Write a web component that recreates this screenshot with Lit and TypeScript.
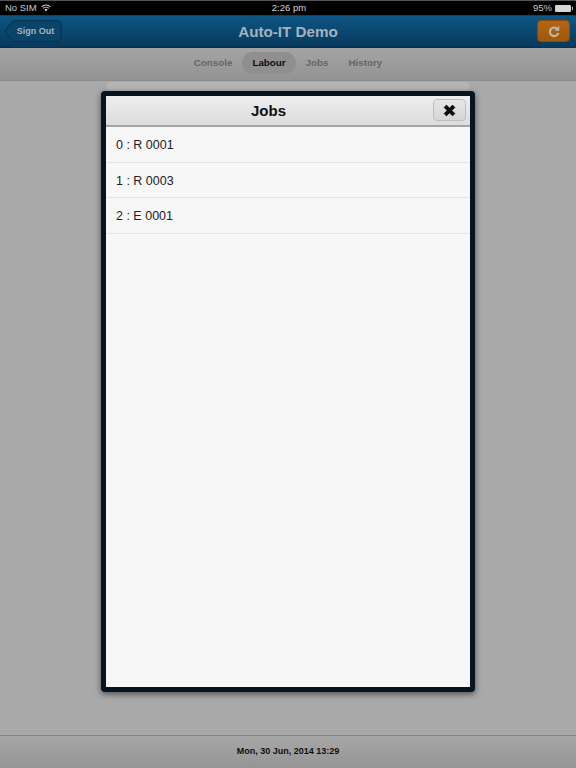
import { LitElement, html, css } from "lit";
import { customElement } from "lit/decorators.js";

@customElement("app-root")
export class AppRoot extends LitElement {
  static styles = css`
    :host { display: block; width: 576px; height: 768px; overflow: hidden; font-family: "Liberation Sans", Arial, sans-serif; }
    .page { position: relative; display: flex; flex-direction: column; height: 768px; background: #a9a9a9; }
    .status { height: 15px; background: #000; border-top: 1px solid #555; box-sizing: border-box; display: grid; grid-template-columns: 1fr auto 1fr; align-items: center; padding: 0 3px 0 5px; color: #c9c9c9; font-size: 9.5px; line-height: 14px; }
    .status .left { display: flex; align-items: center; gap: 4px; }
    .status .time { color: #d4d4d4; font-size: 9.5px; }
    .status .right { display: flex; align-items: center; justify-content: flex-end; gap: 3px; }
    .battery { display: flex; align-items: center; }
    .battery i { display: block; width: 14px; height: 5px; background: #d6d6d6; border: 1px solid #d6d6d6; border-radius: 1px; }
    .battery b { display: block; width: 1px; height: 3px; background: #bbb; margin-left: 1px; }
    .nav { height: 33px; box-sizing: border-box; display: flex; align-items: center; justify-content: space-between; padding: 0 6px 0 4px; position: relative; background: linear-gradient(#0e5684, #07395c); border-top: 1px solid #0a4569; border-bottom: 1px solid #06304c; }
    .nav h1 { position: absolute; left: 0; right: 0; top: 6px; margin: 0; text-align: center; font-size: 15.2px; line-height: 19px; font-weight: 700; color: #a4b2bd; }
    .back { display: block; position: relative; z-index: 1; margin-top: -1px; }
    .refresh { position: relative; z-index: 1; width: 33px; height: 22px; box-sizing: border-box; margin-top: -1px; border: 1px solid #8a4a0c; border-radius: 4px; background: linear-gradient(#b5650f, #a0580c); display: flex; align-items: center; justify-content: center; }
    .tabs { height: 33px; box-sizing: border-box; display: flex; align-items: center; justify-content: center; gap: 0; padding: 0 0 3px 0; background: linear-gradient(#a4a4a4, #939393); border-bottom: 1px solid #8a8a8a; }
    .tab { font-size: 9.8px; font-weight: 700; color: #666; height: 22px; line-height: 22px; padding: 0 10px; border-radius: 11px; }
    .tab.on { color: #0c0c0c; background: #8f8f8f; }
    main { flex: 1; display: flex; justify-content: center; }
    .under { width: 362px; height: 10px; margin-top: 1px; background: #b5b5b5; border-radius: 3px 3px 0 0; }
    footer { height: 33px; box-sizing: border-box; border-top: 1px solid #858585; background: linear-gradient(#a7a7a7, #959595); display: flex; align-items: center; justify-content: center; font-size: 9px; font-weight: 700; color: #111; padding-bottom: 3px; }
    .modal { position: absolute; left: 101px; top: 91px; width: 374px; height: 601px; box-sizing: border-box; border: 5px solid #06141f; border-radius: 4px; background: #f7f7f7; box-shadow: 0 2px 6px rgba(0,0,0,.55); display: flex; flex-direction: column; }
    .mhead { height: 31px; flex: none; box-sizing: border-box; display: flex; align-items: center; padding-left: 145px; position: relative; background: linear-gradient(#eeeeee, #dcdcdc); border-bottom: 2px solid #a4a4a4; }
    .mhead h2 { margin: 0; font-size: 15px; font-weight: 700; color: #111; }
    .close { position: absolute; right: 4px; top: 3px; width: 33px; height: 22px; box-sizing: border-box; border: 1px solid #bdbdbd; border-radius: 4px; background: linear-gradient(#e6e6e6, #d6d6d6); display: flex; align-items: center; justify-content: center; }
    .row { height: 35.5px; box-sizing: border-box; padding: 2px 0 0 10px; display: flex; align-items: center; font-size: 12.5px; color: #222; border-bottom: 1px solid #e4e4e4; }
  `;

  render() {
    return html`<div class="page">
      <div class="status">
        <div class="left"><span>No SIM</span>
          <svg width="10" height="8" viewBox="0 0 10 8"><path d="M.6 2.8a6.3 6.3 0 0 1 8.8 0M2.2 4.4a4 4 0 0 1 5.6 0" fill="none" stroke="#d0d0d0" stroke-width="1.1"/><path d="M3.4 5.5 5 7.4l1.6-1.9a2.2 2.2 0 0 0-3.2 0z" fill="#d0d0d0"/></svg>
        </div>
        <div class="time">2:26 pm</div>
        <div class="right"><span>95%</span><div class="battery"><i></i><b></b></div></div>
      </div>
      <div class="nav">
        <svg class="back" width="58" height="22" viewBox="0 0 58 22">
          <path d="M.7 11 9 .7h45a3.3 3.3 0 0 1 3.3 3.3v14a3.3 3.3 0 0 1-3.3 3.3H9z" fill="#0b4469" stroke="#06304c"/>
          <text x="31.5" y="14" text-anchor="middle" font-family="Liberation Sans" font-size="9" font-weight="700" fill="#a4b4bf">Sign Out</text>
        </svg>
        <h1>Auto-IT Demo</h1>
        <div class="refresh">
          <svg width="12" height="13" viewBox="0 0 12 13"><path d="M9.6 4.2A4.3 4.3 0 1 0 10.3 8" fill="none" stroke="#bdb6ab" stroke-width="2.2"/><path d="M11.2 .8v5H6.4z" fill="#bdb6ab"/></svg>
        </div>
      </div>
      <div class="tabs">
        <span class="tab">Console</span><span class="tab on">Labour</span><span class="tab">Jobs</span><span class="tab">History</span>
      </div>
      <main><div class="under"></div></main>
      <footer>Mon, 30 Jun, 2014 13:29</footer>
      <div class="modal">
        <div class="mhead">
          <h2>Jobs</h2>
          <div class="close">
            <svg width="13" height="13" viewBox="0 0 12 12"><path d="M1 3.2 3.2 1 6 3.8 8.8 1 11 3.2 8.2 6 11 8.8 8.8 11 6 8.2 3.2 11 1 8.8 3.8 6z" fill="#0a0a0a" stroke="#0a0a0a" stroke-width=".6" stroke-linejoin="round"/></svg>
          </div>
        </div>
        <div class="row">0 : R 0001</div>
        <div class="row">1 : R 0003</div>
        <div class="row">2 : E 0001</div>
      </div>
    </div>`;
  }
}
